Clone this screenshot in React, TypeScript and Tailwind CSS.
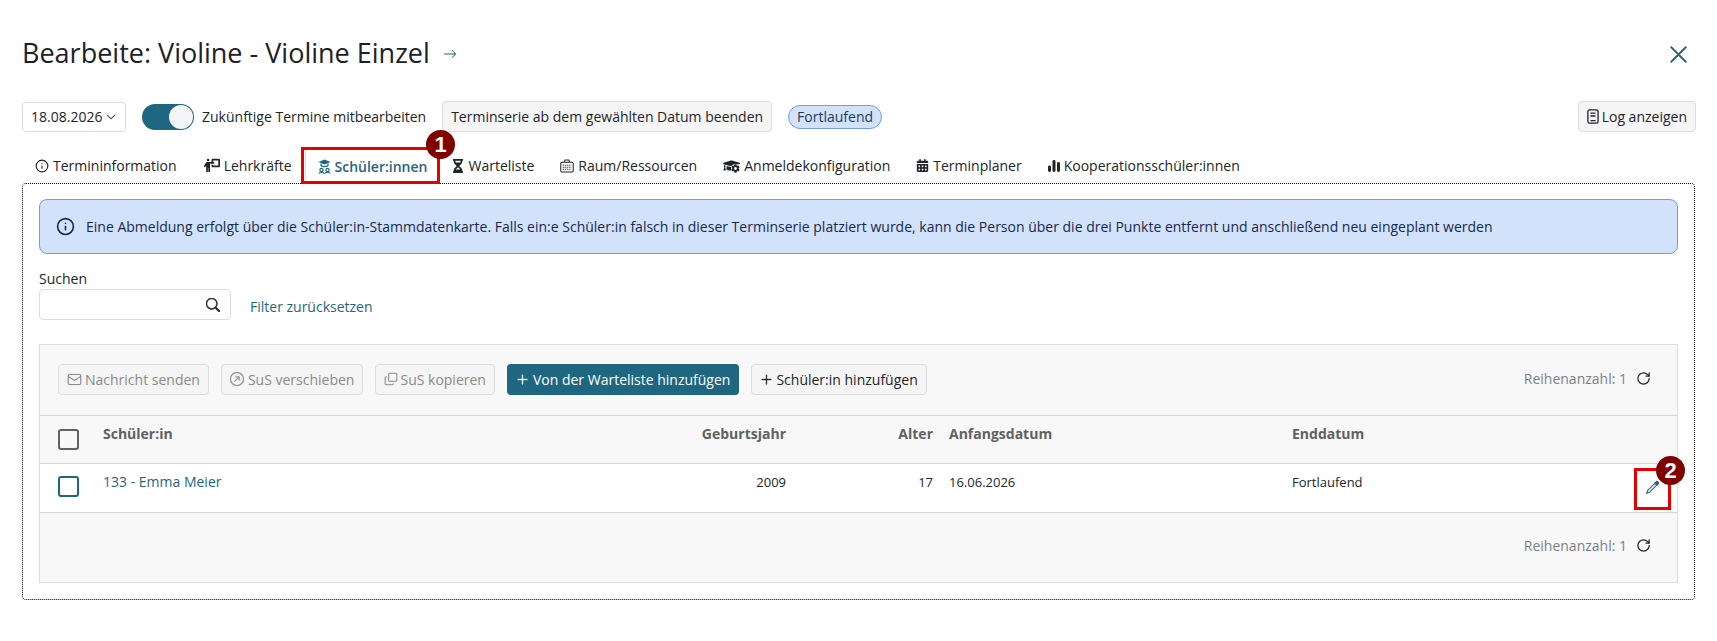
import {
  BsArrowRight,
  BsArrowUpRightCircle,
  BsChevronDown,
  BsPlusLg,
  BsSearch,
  BsXLg,
} from "react-icons/bs";
import { FaCog, FaGraduationCap } from "react-icons/fa";
import { FaCalendarDays, FaHourglassHalf, FaPersonChalkboard } from "react-icons/fa6";
import { Copy, Info, Mail, RotateCw } from "lucide-react";
import type { ReactNode } from "react";

function StudentsIcon() {
  return (
    <svg width="13" height="15" viewBox="0 0 13 15" fill="none" stroke="currentColor" strokeWidth="1.2">
      <path d="M6.5 0.5L12.5 3L6.5 5.5L0.5 3Z" fill="currentColor" stroke="none" />
      <path d="M3 4.5V6.5C4.5 8 8.5 8 10 6.5V4.5" />
      <circle cx="3.5" cy="11" r="1.6" />
      <circle cx="9.5" cy="11" r="1.6" />
      <path d="M0.8 14.6C1.5 12.8 5.5 12.8 6.2 14.6M6.8 14.6C7.5 12.8 11.5 12.8 12.2 14.6" />
    </svg>
  );
}

function CaseIcon() {
  return (
    <svg width="14" height="14" viewBox="0 0 15 14" fill="none" stroke="currentColor" strokeWidth="1.1">
      <path d="M5 3V1.5C5 1 5.4 0.6 5.9 0.6H9.1C9.6 0.6 10 1 10 1.5V3" />
      <rect x="0.8" y="3" width="13.4" height="10.4" rx="1.4" />
      <path d="M3 6.2H12M3 8.4H12M3 10.6H12" strokeDasharray="1.2 0.9" />
    </svg>
  );
}

function BarsIcon() {
  return (
    <svg width="12" height="13" viewBox="0 0 12 13" fill="currentColor">
      <rect x="0" y="6.5" width="3" height="6.5" rx="1.4" />
      <path d="M6 1C6.9 1 7.5 1.6 7.5 2.4V11.6C7.5 12.4 6.9 13 6 13C5.1 13 4.5 12.4 4.5 11.6V2.4C4.5 1.6 5.1 1 6 1Z" />
      <path d="M10.5 3C11.4 3 12 3.6 12 4.4V11.6C12 12.4 11.4 13 10.5 13C9.6 13 9 12.4 9 11.6V4.4C9 3.6 9.6 3 10.5 3Z" />
    </svg>
  );
}

function LogIcon() {
  return (
    <svg width="12" height="15" viewBox="0 0 12 15" fill="none" stroke="currentColor" strokeWidth="1.3">
      <rect x="0.9" y="0.9" width="10.2" height="13.2" rx="1.6" />
      <path d="M3.5 4.2H8.5M3.5 7H8.5M3.5 11.6H8.5" />
    </svg>
  );
}

function PencilIcon() {
  return (
    <svg width="15" height="15" viewBox="0 0 16 16" fill="none" stroke="currentColor" strokeWidth="1.2">
      <path d="M10.5 3.5L12.5 5.5L5 13L1.8 14.2L3 11Z" strokeLinejoin="round" />
      <path d="M10 3L11.8 1.2C12.4 0.7 13.2 0.7 13.9 1.3L14.7 2.1C15.3 2.8 15.3 3.6 14.8 4.2L13 6Z" fill="currentColor" stroke="none" />
    </svg>
  );
}

const tabs: { label: string; icon: ReactNode; active?: boolean }[] = [
  { label: "Termininformation", icon: <Info size={14} strokeWidth={2} /> },
  { label: "Lehrkräfte", icon: <FaPersonChalkboard size={17} /> },
  { label: "Schüler:innen", icon: <StudentsIcon />, active: true },
  { label: "Warteliste", icon: <FaHourglassHalf size={14} className="-mx-px" /> },
  { label: "Raum/Ressourcen", icon: <CaseIcon /> },
  {
    label: "Anmeldekonfiguration",
    icon: (
      <span className="relative block h-[14px] w-[17px]">
        <FaGraduationCap size={17} className="absolute -top-0.5 left-0" />
        <FaCog size={9} className="absolute bottom-0 right-0 rounded-full bg-white text-[#212529]" />
      </span>
    ),
  },
  { label: "Terminplaner", icon: <FaCalendarDays size={13} /> },
  { label: "Kooperationsschüler:innen", icon: <BarsIcon /> },
];

const tableColumns = "grid-cols-[63px_560px_123px_147px_16px_343px_1fr]";

function Marker({ n, className }: { n: number; className: string }) {
  return (
    <span
      className={`absolute z-10 flex items-center justify-center rounded-full bg-[#800000] font-['Liberation_Sans',sans-serif] font-bold text-white ${className}`}
    >
      {n}
    </span>
  );
}

function GreyButton({
  children,
  disabled,
  className = "",
}: {
  children: ReactNode;
  disabled?: boolean;
  className?: string;
}) {
  return (
    <button
      type="button"
      className={`flex h-[31px] items-center gap-1 rounded border border-[#dcdcdc] bg-[#f5f5f5] text-[14px] ${
        disabled ? "text-[#8a8a8a]" : "text-[#212529]"
      } ${className}`}
    >
      {children}
    </button>
  );
}

function RowCount({ className = "" }: { className?: string }) {
  return (
    <div className={`flex items-center gap-[9px] pr-[26px] text-[14px] text-[#7b8187] ${className}`}>
      <span>Reihenanzahl: 1</span>
      <RotateCw size={15} strokeWidth={2} className="text-[#212529]" />
    </div>
  );
}

export default function App() {
  return (
    <div className="h-[641px] w-[1717px] overflow-hidden bg-white font-['Open_Sans',sans-serif] text-[#212529]">
      <div className="flex h-[101px] items-start justify-between pl-[22px] pr-[28px] pt-[34px]">
        <h1 className="flex items-center gap-[13px] text-[27px] font-medium leading-[38px] text-[#1c2126]">
          Bearbeite: Violine - Violine Einzel
          <BsArrowRight size={14} className="mt-0.5 text-[#1f6680]" />
        </h1>
        <BsXLg size={21} strokeWidth={0.6} stroke="currentColor" className="mt-[10px] text-[#1f6680]" />
      </div>

      <div className="flex h-[31px] items-center pl-[22px] pr-[21px] text-[14px]">
        <div className="flex h-[30px] w-[104px] items-center gap-1 rounded border border-[#dcdcdc] bg-white pl-2">
          18.08.2026
          <BsChevronDown size={10} strokeWidth={0.6} stroke="currentColor" />
        </div>
        <div className="ml-4 flex h-[26px] w-[52px] items-center justify-end rounded-full bg-[#1f6680] pr-px">
          <span className="h-6 w-6 rounded-full bg-[#f5f5f5]" />
        </div>
        <span className="ml-2">Zukünftige Termine mitbearbeiten</span>
        <GreyButton className="ml-4 px-2">Terminserie ab dem gewählten Datum beenden</GreyButton>
        <span className="ml-4 flex h-6 items-center rounded-full border border-[#6d9eeb] bg-[#d3e2fb] px-2 text-[#1c3a66]">
          Fortlaufend
        </span>
        <GreyButton className="ml-auto gap-[3px] px-2">
          <LogIcon />
          Log anzeigen
        </GreyButton>
      </div>

      <div className="relative flex h-[51px] items-end pl-[22px]">
        {tabs.map((tab) => (
          <div
            key={tab.label}
            className={`flex h-[35px] items-center gap-1 text-[14px] ${
              tab.active
                ? "rounded-t border border-b-0 border-[#dcdcdc] pl-3 pr-[11px] font-semibold text-[#1f6680]"
                : "px-[13px]"
            }`}
          >
            {tab.icon}
            {tab.label}
          </div>
        ))}
        <div className="pointer-events-none absolute left-[301px] top-[15px] h-[37px] w-[139px] border-[3px] border-[#e60000]" />
        <Marker n={1} className="left-[426px] top-[-2px] h-[29px] w-[29px] text-[22px]" />
      </div>

      <div className="mx-[22px] h-[417px] rounded-sm border border-dotted border-black px-4 pt-[15px]">
        <div className="flex h-[55px] items-center gap-[11px] rounded-lg border border-[#6d9eeb] bg-[#d3e2fb] px-4 text-[14px] text-[#16294d]">
          <Info size={19} strokeWidth={2} />
          Eine Abmeldung erfolgt über die Schüler:in-Stammdatenkarte. Falls ein:e Schüler:in falsch in dieser Terminserie platziert wurde, kann die Person über die drei Punkte entfernt und anschließend neu eingeplant werden
        </div>

        <div className="mt-[14px] text-[14px] leading-[21px]">Suchen</div>
        <div className="flex items-center gap-[19px]">
          <div className="flex h-[31px] w-[192px] items-center justify-end rounded border border-[#dcdcdc] bg-white pr-2.5">
            <BsSearch size={14} strokeWidth={0.7} stroke="currentColor" className="text-[#212529]" />
          </div>
          <a className="mt-1 text-[14px] text-[#1f6680]">Filter zurücksetzen</a>
        </div>

        <div className="mt-[24px] border border-[#dcdde0] bg-[#f8f8f9]">
          <div className="flex h-[71px] items-center justify-between border-b border-[#d5d6d9] pb-0.5 pl-[18px]">
            <div className="flex items-center gap-3">
              <GreyButton disabled className="gap-[3px] px-2">
                <Mail size={15} strokeWidth={1.8} />
                Nachricht senden
              </GreyButton>
              <GreyButton disabled className="px-2">
                <BsArrowUpRightCircle size={14} strokeWidth={0.3} stroke="currentColor" />
                SuS verschieben
              </GreyButton>
              <GreyButton disabled className="gap-[2px] px-2">
                <Copy size={14} strokeWidth={1.8} className="-scale-y-100" />
                SuS kopieren
              </GreyButton>
              <button
                type="button"
                className="flex h-[31px] items-center gap-1 rounded bg-[#1f6680] px-[9px] text-[14px] font-medium text-white"
              >
                <BsPlusLg size={13} strokeWidth={0.5} stroke="currentColor" />
                Von der Warteliste hinzufügen
              </button>
              <GreyButton className="gap-[3px] px-2">
                <BsPlusLg size={13} strokeWidth={0.5} stroke="currentColor" />
                Schüler:in hinzufügen
              </GreyButton>
            </div>
            <RowCount className="-mt-0.5" />
          </div>

          <div className={`grid h-[48px] ${tableColumns} border-b border-[#d5d6d9] pt-[7px] text-[14px] font-bold text-[#616161]`}>
            <span className="ml-[18px] mt-[6px] h-[21px] w-[21px] rounded-[3px] border-2 border-[#616161]" />
            <span>Schüler:in</span>
            <span className="text-right">Geburtsjahr</span>
            <span className="text-right">Alter</span>
            <span />
            <span>Anfangsdatum</span>
            <span>Enddatum</span>
          </div>

          <div className={`relative grid h-[49px] ${tableColumns} border-b border-[#d5d6d9] bg-white pt-2.5 text-[13px]`}>
            <span className="ml-[18px] mt-[2px] h-[21px] w-[21px] rounded-[3px] border-2 border-[#1f6680]" />
            <a className="-mt-[3px] text-[14px] text-[#1f6680]">133 - Emma Meier</a>
            <span className="-mt-px text-right">2009</span>
            <span className="-mt-px text-right">17</span>
            <span />
            <span className="-mt-px">16.06.2026</span>
            <span className="-mt-px">Fortlaufend</span>
            <span className="absolute right-[17px] top-[16px] text-[#1f6680]">
              <PencilIcon />
            </span>
            <div className="pointer-events-none absolute right-[6px] top-[4px] h-[42px] w-[37px] border-[3px] border-[#e60000]" />
            <Marker n={2} className="right-[-8px] top-[-8px] h-[29px] w-[29px] text-[22px]" />
          </div>

          <div className="flex h-[69px] items-center justify-end pb-1">
            <RowCount />
          </div>
        </div>
      </div>
    </div>
  );
}
